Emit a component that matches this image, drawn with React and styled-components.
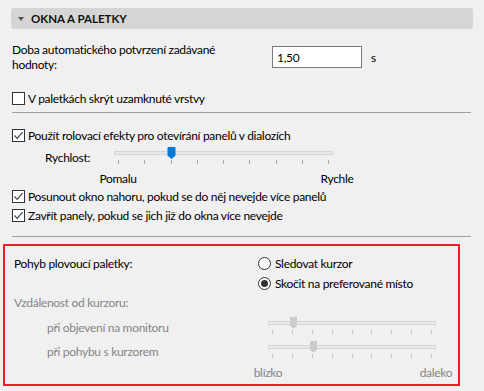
import React from 'react'
import styled, { createGlobalStyle } from 'styled-components'

const GlobalStyle = createGlobalStyle`
  html, body {
    margin: 0;
    padding: 0;
    background: #f0f0f0;
  }
  body {
    font-family: Lato, "Noto Sans", sans-serif;
    font-size: 12px;
    letter-spacing: -0.3px;
    color: #000;
  }
`

const Page = styled.div`
  width: 484px;
  height: 391px;
  box-sizing: border-box;
  padding: 8px 11px 0 11px;
  display: flex;
  flex-direction: column;
  overflow: hidden;
`

const Header = styled.div`
  height: 21px;
  background: #d5d5d5;
  border-radius: 3px;
  display: flex;
  align-items: center;
  gap: 7px;
  padding-left: 7px;
  font-weight: 700;
  font-size: 11.5px;
  letter-spacing: 0;
  color: #111;
`

const Caret = styled.span`
  width: 0;
  height: 0;
  border-left: 3.5px solid transparent;
  border-right: 3.5px solid transparent;
  border-top: 4px solid #555;
`

const FieldRow = styled.div`
  margin-top: 17px;
  height: 22px;
  display: flex;
  align-items: center;
  padding-left: 1px;
`

const FieldLabel = styled.div`
  width: 260px;
  line-height: 14.5px;
  padding-top: 1px;
`

const Input = styled.div`
  width: 84px;
  height: 20px;
  border: 1px solid #7a7a7a;
  background: #fff;
  display: flex;
  align-items: center;
  padding-left: 4px;
`

const Unit = styled.span`
  margin-left: 9px;
`

const Row = styled.div`
  margin-top: ${p => p.$mt || 0}px;
  height: 16px;
  display: flex;
  align-items: center;
  padding-left: 1px;
  gap: 3px;
`

const Box = styled.span`
  width: 11px;
  height: 11px;
  border: 1px solid #333;
  background: #fff;
  display: flex;
  align-items: center;
  justify-content: center;
  flex-shrink: 0;
`

const Divider = styled.div`
  margin-top: ${p => p.$mt}px;
  height: 1px;
  background: #a0a0a0;
  margin-left: 1px;
  margin-right: 2px;
`

const SliderRow = styled.div`
  margin-top: ${p => p.$mt || 0}px;
  height: 20px;
  display: flex;
  align-items: center;
  padding-left: ${p => p.$indent}px;
  color: ${p => (p.$disabled ? '#858585' : '#000')};
`

const SliderLabel = styled.div`
  width: ${p => p.$w}px;
  flex-shrink: 0;
`

const SliderWrap = styled.div`
  position: relative;
  width: ${p => p.$w}px;
  height: 20px;
`

const Track = styled.div`
  position: absolute;
  left: 0;
  right: 0;
  top: 4px;
  height: 2px;
  background: #e7e7e7;
  border: 1px solid #d6d6d6;
`

const Ticks = styled.div`
  position: absolute;
  left: 4px;
  right: 4px;
  top: 13px;
  display: flex;
  justify-content: space-between;
`

const Tick = styled.span`
  width: 1px;
  height: 4px;
  background: ${p => (p.$disabled ? '#c4c4c4' : '#a8a8a8')};
`

const Thumb = styled.svg`
  position: absolute;
  top: 0;
`

const EndLabels = styled.div`
  margin-top: ${p => p.$mt}px;
  height: 16px;
  display: flex;
  align-items: center;
  justify-content: space-between;
  margin-left: ${p => p.$left}px;
  width: ${p => p.$w}px;
  color: ${p => (p.$disabled ? '#858585' : '#000')};
`

const EndLabel = styled.span`
  width: 0;
  display: flex;
  justify-content: center;
  white-space: nowrap;
`

const Highlight = styled.div`
  margin-top: 7px;
  margin-left: -8px;
  width: 457px;
  height: 142px;
  box-sizing: border-box;
  border: 2px solid #ee1d24;
  padding: 7px 0 0 7px;
  display: flex;
  flex-direction: column;
`

const Top = styled.div`
  display: flex;
`

const TopLabel = styled.div`
  width: 244px;
  height: 20px;
  display: flex;
  align-items: center;
  padding-left: 2px;
`

const Radios = styled.div`
  display: flex;
  flex-direction: column;
`

const RadioRow = styled.div`
  height: 20px;
  display: flex;
  align-items: center;
  gap: 4px;
`

const Circle = styled.span`
  width: 11px;
  height: 11px;
  border-radius: 50%;
  border: 1px solid #333;
  background: #fff;
  display: flex;
  align-items: center;
  justify-content: center;
`

const Dot = styled.span`
  width: 7px;
  height: 7px;
  border-radius: 50%;
  background: #333;
`

const Muted = styled.div`
  margin-top: 1px;
  height: 16px;
  display: flex;
  align-items: center;
  padding-left: 2px;
  color: #858585;
`

const Checkbox = ({ checked, children, mt }) => (
  <Row $mt={mt}>
    <Box>
      {checked && (
        <svg width="11" height="11" viewBox="0 0 11 11">
          <path d="M1.5 5.5 L4.2 8.3 L9.6 2.2" fill="none" stroke="#444" strokeWidth="1.2" />
        </svg>
      )}
    </Box>
    <span>{children}</span>
  </Row>
)

const Slider = ({ width, value, disabled }) => {
  const step = (width - 9) / 8
  const center = 4 + value * step
  return (
    <SliderWrap $w={width}>
      <Track />
      <Ticks>
        {Array.from({ length: 9 }).map((_, i) => (
          <Tick key={i} $disabled={disabled} />
        ))}
      </Ticks>
      {disabled ? (
        <Thumb width="7" height="12" viewBox="0 0 7 12" style={{ left: center - 2 }}>
          <path d="M0 0 H7 V9 L3.5 11.5 L0 9 Z" fill="#cccccc" />
        </Thumb>
      ) : (
        <Thumb width="9" height="12" viewBox="0 0 9 12" style={{ left: center - 4 }}>
          <path d="M0.5 1 Q0.5 0 1.5 0 H7.5 Q8.5 0 8.5 1 V8.5 L4.5 12 L0.5 8.5 Z" fill="#0078d7" />
        </Thumb>
      )}
    </SliderWrap>
  )
}

const App = () => {
  return (
    <Page>
      <GlobalStyle />
      <Header>
        <Caret />
        <span>OKNA A PALETKY</span>
      </Header>

      <FieldRow>
        <FieldLabel>
          Doba automatického potvrzení zadávané
          <br />
          hodnoty:
        </FieldLabel>
        <Input>1,50</Input>
        <Unit>s</Unit>
      </FieldRow>

      <Checkbox mt={22}>V paletkách skrýt uzamknuté vrstvy</Checkbox>
      <Divider $mt={6} />

      <Checkbox checked mt={14}>Použít rolovací efekty pro otevírání panelů v dialozích</Checkbox>
      <SliderRow $mt={4} $indent={34}>
        <SliderLabel $w={69}>Rychlost:</SliderLabel>
        <Slider width={219} value={2} />
      </SliderRow>
      <EndLabels $mt={3} $left={107} $w={219}>
        <EndLabel>Pomalu</EndLabel>
        <EndLabel>Rychle</EndLabel>
      </EndLabels>
      <Checkbox checked mt={2}>Posunout okno nahoru, pokud se do něj nevejde více panelů</Checkbox>
      <Checkbox checked mt={3}>Zavřít panely, pokud se jich již do okna více nevejde</Checkbox>
      <Divider $mt={13} />

      <Highlight>
        <Top>
          <TopLabel>Pohyb plovoucí paletky:</TopLabel>
          <Radios>
            <RadioRow>
              <Circle />
              <span>Sledovat kurzor</span>
            </RadioRow>
            <RadioRow>
              <Circle>
                <Dot />
              </Circle>
              <span>Skočit na preferované místo</span>
            </RadioRow>
          </Radios>
        </Top>
        <Muted>Vzdálenost od kurzoru:</Muted>
        <SliderRow $mt={7} $indent={35} $disabled>
          <SliderLabel $w={221}>při objevení na monitoru</SliderLabel>
          <Slider width={168} value={1} disabled />
        </SliderRow>
        <SliderRow $mt={4} $indent={35} $disabled>
          <SliderLabel $w={221}>při pohybu s kurzorem</SliderLabel>
          <Slider width={168} value={2} disabled />
        </SliderRow>
        <EndLabels $mt={3} $left={256} $w={168} $disabled>
          <EndLabel>blízko</EndLabel>
          <EndLabel>daleko</EndLabel>
        </EndLabels>
      </Highlight>
    </Page>
  )
}

export default App
